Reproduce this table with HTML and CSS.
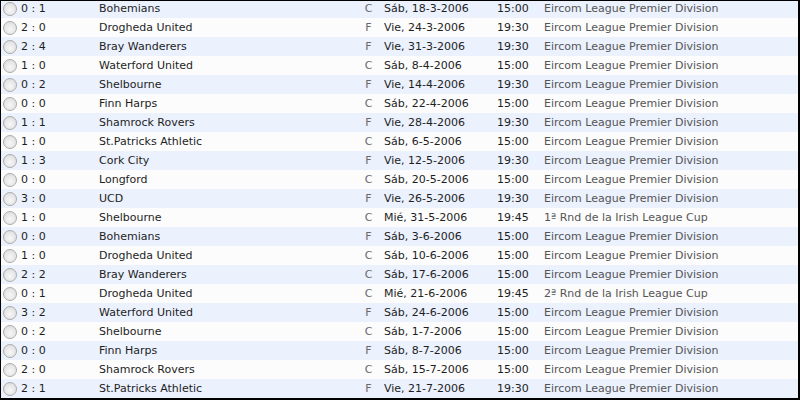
FILE: index.html
```html
<!DOCTYPE html>
<html>
<head>
<meta charset="utf-8">
<link rel="stylesheet" href="styles.css">
</head>
<body>
<div class="frame">
  <div class="list">
    <div class="row"><span class="radio"></span><span class="score">0 : 1</span><span class="team">Bohemians</span><span class="venue">C</span><span class="date">Sáb, 18-3-2006</span><span class="time">15:00</span><span class="comp">Eircom League Premier Division</span></div>
    <div class="row"><span class="radio"></span><span class="score">2 : 0</span><span class="team">Drogheda United</span><span class="venue">F</span><span class="date">Vie, 24-3-2006</span><span class="time">19:30</span><span class="comp">Eircom League Premier Division</span></div>
    <div class="row"><span class="radio"></span><span class="score">2 : 4</span><span class="team">Bray Wanderers</span><span class="venue">F</span><span class="date">Vie, 31-3-2006</span><span class="time">19:30</span><span class="comp">Eircom League Premier Division</span></div>
    <div class="row"><span class="radio"></span><span class="score">1 : 0</span><span class="team">Waterford United</span><span class="venue">C</span><span class="date">Sáb, 8-4-2006</span><span class="time">15:00</span><span class="comp">Eircom League Premier Division</span></div>
    <div class="row"><span class="radio"></span><span class="score">0 : 2</span><span class="team">Shelbourne</span><span class="venue">F</span><span class="date">Vie, 14-4-2006</span><span class="time">19:30</span><span class="comp">Eircom League Premier Division</span></div>
    <div class="row"><span class="radio"></span><span class="score">0 : 0</span><span class="team">Finn Harps</span><span class="venue">C</span><span class="date">Sáb, 22-4-2006</span><span class="time">15:00</span><span class="comp">Eircom League Premier Division</span></div>
    <div class="row"><span class="radio"></span><span class="score">1 : 1</span><span class="team">Shamrock Rovers</span><span class="venue">F</span><span class="date">Vie, 28-4-2006</span><span class="time">19:30</span><span class="comp">Eircom League Premier Division</span></div>
    <div class="row"><span class="radio"></span><span class="score">1 : 0</span><span class="team">St.Patricks Athletic</span><span class="venue">C</span><span class="date">Sáb, 6-5-2006</span><span class="time">15:00</span><span class="comp">Eircom League Premier Division</span></div>
    <div class="row"><span class="radio"></span><span class="score">1 : 3</span><span class="team">Cork City</span><span class="venue">F</span><span class="date">Vie, 12-5-2006</span><span class="time">19:30</span><span class="comp">Eircom League Premier Division</span></div>
    <div class="row"><span class="radio"></span><span class="score">0 : 0</span><span class="team">Longford</span><span class="venue">C</span><span class="date">Sáb, 20-5-2006</span><span class="time">15:00</span><span class="comp">Eircom League Premier Division</span></div>
    <div class="row"><span class="radio"></span><span class="score">3 : 0</span><span class="team">UCD</span><span class="venue">F</span><span class="date">Vie, 26-5-2006</span><span class="time">19:30</span><span class="comp">Eircom League Premier Division</span></div>
    <div class="row"><span class="radio"></span><span class="score">1 : 0</span><span class="team">Shelbourne</span><span class="venue">C</span><span class="date">Mié, 31-5-2006</span><span class="time">19:45</span><span class="comp">1ª Rnd de la Irish League Cup</span></div>
    <div class="row"><span class="radio"></span><span class="score">0 : 0</span><span class="team">Bohemians</span><span class="venue">F</span><span class="date">Sáb, 3-6-2006</span><span class="time">15:00</span><span class="comp">Eircom League Premier Division</span></div>
    <div class="row"><span class="radio"></span><span class="score">1 : 0</span><span class="team">Drogheda United</span><span class="venue">C</span><span class="date">Sáb, 10-6-2006</span><span class="time">15:00</span><span class="comp">Eircom League Premier Division</span></div>
    <div class="row"><span class="radio"></span><span class="score">2 : 2</span><span class="team">Bray Wanderers</span><span class="venue">C</span><span class="date">Sáb, 17-6-2006</span><span class="time">15:00</span><span class="comp">Eircom League Premier Division</span></div>
    <div class="row"><span class="radio"></span><span class="score">0 : 1</span><span class="team">Drogheda United</span><span class="venue">C</span><span class="date">Mié, 21-6-2006</span><span class="time">19:45</span><span class="comp">2ª Rnd de la Irish League Cup</span></div>
    <div class="row"><span class="radio"></span><span class="score">3 : 2</span><span class="team">Waterford United</span><span class="venue">F</span><span class="date">Sáb, 24-6-2006</span><span class="time">15:00</span><span class="comp">Eircom League Premier Division</span></div>
    <div class="row"><span class="radio"></span><span class="score">0 : 2</span><span class="team">Shelbourne</span><span class="venue">C</span><span class="date">Sáb, 1-7-2006</span><span class="time">15:00</span><span class="comp">Eircom League Premier Division</span></div>
    <div class="row"><span class="radio"></span><span class="score">0 : 0</span><span class="team">Finn Harps</span><span class="venue">F</span><span class="date">Sáb, 8-7-2006</span><span class="time">15:00</span><span class="comp">Eircom League Premier Division</span></div>
    <div class="row"><span class="radio"></span><span class="score">2 : 0</span><span class="team">Shamrock Rovers</span><span class="venue">C</span><span class="date">Sáb, 15-7-2006</span><span class="time">15:00</span><span class="comp">Eircom League Premier Division</span></div>
    <div class="row"><span class="radio"></span><span class="score">2 : 1</span><span class="team">St.Patricks Athletic</span><span class="venue">F</span><span class="date">Vie, 21-7-2006</span><span class="time">19:30</span><span class="comp">Eircom League Premier Division</span></div>
  </div>
</div>
</body>
</html>
```

FILE: styles.css
```css
html, body {
  margin: 0;
  padding: 0;
  background: #ffffff;
}

.frame {
  width: 800px;
  height: 400px;
  box-sizing: border-box;
  border-top: 1px solid #000;
  border-left: 1px solid #000;
  border-right: 2px solid #000;
  border-bottom: 2px solid #000;
  overflow: hidden;
}

.list {
  margin-top: -2px;
  font-family: "DejaVu Sans", Verdana, sans-serif;
  font-size: 11px;
  color: #1e1e1e;
}

.row {
  display: grid;
  grid-template-columns: 19px 79px 260px 25px 113px 47px 1fr;
  align-items: center;
  height: 19px;
  background: #fcfcfc;
}

.row:nth-child(odd) {
  background: #ebf1fd;
}

.radio {
  width: 12px;
  height: 12px;
  margin-left: 2px;
  border-radius: 50%;
  border: 1px solid #ababab;
  background: radial-gradient(circle at 50% 60%, #f7f7f7 0%, #e2e2e2 70%, #d0d0d0 100%);
  box-sizing: content-box;
}

.score {
  padding-left: 1px;
}

.venue {
  color: #6a6a6a;
  padding-right: 6px;
  text-align: center;
}

.comp {
  color: #555;
}
```
